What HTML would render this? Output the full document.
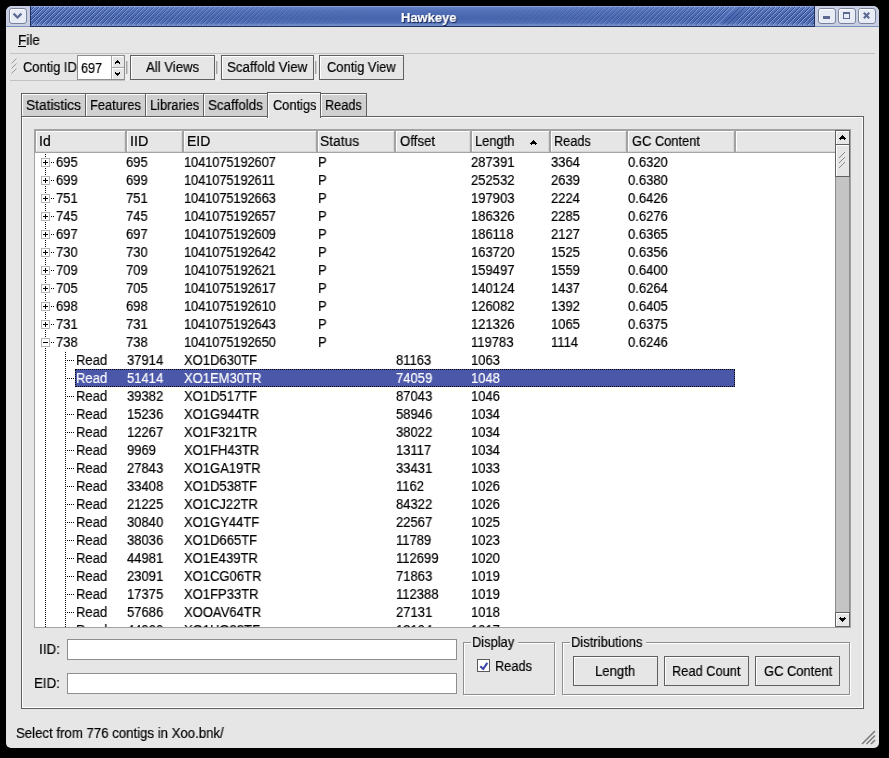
<!DOCTYPE html>
<html><head><meta charset="utf-8"><style>
html,body{margin:0;padding:0;}
body{width:889px;height:758px;background:#000;position:relative;overflow:hidden;font-family:"Liberation Sans",sans-serif;}
div,svg{position:absolute;box-sizing:content-box;}
.tf{white-space:nowrap;font-family:"Liberation Sans",sans-serif;will-change:transform;transform-origin:0 0;-webkit-text-stroke:0.2px currentColor;}
.t{white-space:nowrap;will-change:transform;transform:scaleX(0.93);transform-origin:0 0;-webkit-text-stroke:0.2px currentColor;font-family:"Liberation Sans",sans-serif;}
</style></head><body>
<div style="left:6px;top:6px;width:873px;height:742px;background:#e6e6e6;border-radius:6px 6px 5px 5px;"></div>
<div style="left:6px;top:6px;width:873px;height:20px;background:#c8cfe2;border-radius:6px 6px 0 0;"></div>
<div style="left:6px;top:26px;width:873px;height:1px;background:#7d8fbd;"></div>
<div style="left:30px;top:6px;width:785px;height:21px;background:#1f3060"></div>
<div style="left:31px;top:6px;width:783px;height:20px;background:linear-gradient(180deg,#8aa2da 0px,#8aa2da 1px,#6280c3 1px,#5170b7 5px,#4765ad 12px,#4f6db4 17px,#7390ca 19px,#7390ca 20px)"></div>
<div style="left:31px;top:7px;width:783px;height:18px;background:repeating-linear-gradient(135deg,transparent 0px,transparent 1.5px,rgba(25,40,95,0.55) 1.5px,rgba(25,40,95,0.55) 2.2px,rgba(190,208,250,0.55) 2.2px,rgba(190,208,250,0.55) 2.9px,transparent 2.9px,transparent 3.54px);-webkit-mask-image:linear-gradient(90deg,#000 0%,rgba(0,0,0,0.15) 35%,transparent 46%,transparent 54%,rgba(0,0,0,0.15) 65%,#000 100%);"></div>
<div class="tf" style="left:402.11px;top:11px;font-size:13px;line-height:15px;color:#1c2a55;transform:scaleX(0.9944);font-weight:bold;">Hawkeye</div>
<div class="tf" style="left:401.11px;top:10px;font-size:13px;line-height:15px;color:#fff;transform:scaleX(0.9944);font-weight:bold;">Hawkeye</div>
<div style="left:9px;top:8px;width:16px;height:14px;border:1px solid #78829c;border-radius:3px;background:#e8ecf6;"></div>
<div style="left:11px;top:9px;width:13px;height:1px;background:#fff"></div>
<div style="left:10px;top:10px;width:1px;height:11px;background:#fff"></div>
<div style="left:818px;top:8px;width:16px;height:14px;border:1px solid #78829c;border-radius:3px;background:#e8ecf6;"></div>
<div style="left:820px;top:9px;width:13px;height:1px;background:#fff"></div>
<div style="left:819px;top:10px;width:1px;height:11px;background:#fff"></div>
<div style="left:838px;top:8px;width:16px;height:14px;border:1px solid #78829c;border-radius:3px;background:#e8ecf6;"></div>
<div style="left:840px;top:9px;width:13px;height:1px;background:#fff"></div>
<div style="left:839px;top:10px;width:1px;height:11px;background:#fff"></div>
<div style="left:858px;top:8px;width:16px;height:14px;border:1px solid #78829c;border-radius:3px;background:#e8ecf6;"></div>
<div style="left:860px;top:9px;width:13px;height:1px;background:#fff"></div>
<div style="left:859px;top:10px;width:1px;height:11px;background:#fff"></div>
<svg style="left:12px;top:11px" width="12" height="10"><path d="M1.6 2.6 L5.5 6.5 L9.4 2.6" stroke="#5b6a90" stroke-width="2.2" fill="none"/></svg>
<div style="left:823px;top:16px;width:7px;height:3px;background:#5b6890;"></div>
<div style="left:843px;top:12px;width:5px;height:4px;border:1px solid #5b6890;border-top:2px solid #5b6890;"></div>
<svg style="left:862px;top:11px" width="9" height="9"><path d="M1.8 1.8 L7.2 7.2 M7.2 1.8 L1.8 7.2" stroke="#5b6890" stroke-width="2.1" fill="none"/></svg>
<div class="tf" style="left:17.93px;top:33px;font-size:14px;line-height:15px;color:#000;transform:scaleX(0.9714);">File</div>
<div style="left:18px;top:46px;width:8px;height:1px;background:#000;"></div>
<div style="left:10px;top:53px;width:865px;height:1px;background:#c2c2c2;"></div>
<div style="left:10px;top:80px;width:119px;height:1px;background:#c2c2c2;"></div>
<svg style="left:11px;top:57px" width="7" height="17"><path d="M0.5 6.5 L5.5 1.5 M0.5 11.5 L5.5 6.5 M0.5 16.5 L5.5 11.5" stroke="#9a9a9a" stroke-width="1" fill="none"/></svg>
<div class="tf" style="left:22.70px;top:60px;font-size:14px;line-height:15px;color:#000;transform:scaleX(0.9224);">Contig ID</div>
<div style="left:77px;top:55px;width:46px;height:23px;border:1px solid #8e8e8e;"></div>
<div style="left:78px;top:56px;width:33px;height:23px;background:#fff;"></div>
<div style="left:111px;top:56px;width:13px;height:23px;background:#e6e6e6;"></div>
<div style="left:111px;top:56px;width:1px;height:23px;background:#a8a8a8;"></div>
<div style="left:112px;top:67px;width:12px;height:1px;background:#a8a8a8;"></div>
<div style="left:112px;top:56px;width:11px;height:1px;background:#fff;"></div>
<div style="left:112px;top:56px;width:1px;height:11px;background:#fff;"></div>
<div style="left:112px;top:68px;width:11px;height:1px;background:#fff;"></div>
<div style="left:112px;top:68px;width:1px;height:11px;background:#fff;"></div>
<svg style="left:115px;top:60px" width="5" height="4" shape-rendering="crispEdges" fill="#000"><rect x="2" y="0" width="1" height="1"/><rect x="1" y="1" width="1" height="1"/><rect x="2" y="1" width="1" height="1"/><rect x="3" y="1" width="1" height="1"/><rect x="0" y="2" width="1" height="1"/><rect x="1" y="2" width="1" height="1"/><rect x="2" y="2" width="1" height="1"/><rect x="3" y="2" width="1" height="1"/><rect x="4" y="2" width="1" height="1"/><rect x="0" y="3" width="1" height="1"/><rect x="4" y="3" width="1" height="1"/></svg>
<svg style="left:115px;top:72px" width="5" height="4" shape-rendering="crispEdges" fill="#000"><rect x="0" y="0" width="1" height="1"/><rect x="4" y="0" width="1" height="1"/><rect x="0" y="1" width="1" height="1"/><rect x="1" y="1" width="1" height="1"/><rect x="2" y="1" width="1" height="1"/><rect x="3" y="1" width="1" height="1"/><rect x="4" y="1" width="1" height="1"/><rect x="1" y="2" width="1" height="1"/><rect x="2" y="2" width="1" height="1"/><rect x="3" y="2" width="1" height="1"/><rect x="2" y="3" width="1" height="1"/></svg>
<div class="tf" style="left:80.70px;top:61px;font-size:14px;line-height:15px;color:#000;transform:scaleX(0.9043);">697</div>
<div style="left:125px;top:54px;width:5px;height:27px;background:#ececec;"></div>
<div style="left:126px;top:61px;width:1px;height:13px;background:#a4a4a4;"></div>
<div style="left:127px;top:61px;width:1px;height:13px;background:#cdcdcd;"></div>
<div style="left:215px;top:54px;width:5px;height:27px;background:#ececec;"></div>
<div style="left:216px;top:61px;width:1px;height:13px;background:#a4a4a4;"></div>
<div style="left:217px;top:61px;width:1px;height:13px;background:#cdcdcd;"></div>
<div style="left:314px;top:54px;width:5px;height:27px;background:#ececec;"></div>
<div style="left:315px;top:61px;width:1px;height:13px;background:#a4a4a4;"></div>
<div style="left:316px;top:61px;width:1px;height:13px;background:#cdcdcd;"></div>
<div style="left:130px;top:55px;width:83px;height:23px;border:1px solid #606060;background:#e6e6e6;"></div>
<div style="left:131px;top:56px;width:83px;height:1px;background:#fff;"></div>
<div style="left:131px;top:56px;width:1px;height:23px;background:#fff;"></div>
<div class="tf" style="left:145.90px;top:60px;font-size:14px;line-height:15px;color:#000;transform:scaleX(0.9393);">All Views</div>
<div style="left:221px;top:55px;width:91px;height:23px;border:1px solid #606060;background:#e6e6e6;"></div>
<div style="left:222px;top:56px;width:91px;height:1px;background:#fff;"></div>
<div style="left:222px;top:56px;width:1px;height:23px;background:#fff;"></div>
<div class="tf" style="left:226.85px;top:60px;font-size:14px;line-height:15px;color:#000;transform:scaleX(0.9512);">Scaffold View</div>
<div style="left:319px;top:55px;width:83px;height:23px;border:1px solid #606060;background:#e6e6e6;"></div>
<div style="left:320px;top:56px;width:83px;height:1px;background:#fff;"></div>
<div style="left:320px;top:56px;width:1px;height:23px;background:#fff;"></div>
<div class="tf" style="left:326.50px;top:60px;font-size:14px;line-height:15px;color:#000;transform:scaleX(0.9227);">Contig View</div>
<div style="left:21px;top:116px;width:843px;height:593px;background:#606060;"></div>
<div style="left:22px;top:117px;width:841px;height:591px;background:#fff;"></div>
<div style="left:23px;top:118px;width:839px;height:589px;background:#e6e6e6;"></div>
<div style="left:21px;top:93px;width:65px;height:24px;background:#606060;"></div>
<div style="left:22px;top:94px;width:63px;height:22px;background:#fff;"></div>
<div style="left:23px;top:95px;width:62px;height:21px;background:#d0d0d0;"></div>
<div class="tf" style="left:25.72px;top:98px;font-size:14px;line-height:15px;color:#000;transform:scaleX(0.9800);">Statistics</div>
<div style="left:85px;top:93px;width:61px;height:24px;background:#606060;"></div>
<div style="left:86px;top:94px;width:59px;height:22px;background:#fff;"></div>
<div style="left:87px;top:95px;width:58px;height:21px;background:#d0d0d0;"></div>
<div class="tf" style="left:89.98px;top:98px;font-size:14px;line-height:15px;color:#000;transform:scaleX(0.9204);">Features</div>
<div style="left:145px;top:93px;width:59px;height:24px;background:#606060;"></div>
<div style="left:146px;top:94px;width:57px;height:22px;background:#fff;"></div>
<div style="left:147px;top:95px;width:56px;height:21px;background:#d0d0d0;"></div>
<div class="tf" style="left:150.08px;top:98px;font-size:14px;line-height:15px;color:#000;transform:scaleX(0.9154);">Libraries</div>
<div style="left:203px;top:93px;width:65px;height:24px;background:#606060;"></div>
<div style="left:204px;top:94px;width:63px;height:22px;background:#fff;"></div>
<div style="left:205px;top:95px;width:62px;height:21px;background:#d0d0d0;"></div>
<div class="tf" style="left:208.14px;top:98px;font-size:14px;line-height:15px;color:#000;transform:scaleX(0.9571);">Scaffolds</div>
<div style="left:267px;top:92px;width:54px;height:26px;background:#606060;"></div>
<div style="left:268px;top:93px;width:52px;height:26px;background:#fff;"></div>
<div style="left:269px;top:94px;width:51px;height:25px;background:#e6e6e6;"></div>
<div class="tf" style="left:272.80px;top:98px;font-size:14px;line-height:15px;color:#000;transform:scaleX(0.9149);">Contigs</div>
<div style="left:320px;top:93px;width:47px;height:24px;background:#606060;"></div>
<div style="left:321px;top:94px;width:45px;height:22px;background:#fff;"></div>
<div style="left:322px;top:95px;width:44px;height:21px;background:#d0d0d0;"></div>
<div class="tf" style="left:325.39px;top:98px;font-size:14px;line-height:15px;color:#000;transform:scaleX(0.9077);">Reads</div>
<div style="left:34px;top:129px;width:817px;height:499px;background:#a3a3a3;"></div>
<div style="left:35px;top:130px;width:815px;height:497px;background:#fff;"></div>
<div style="left:35px;top:130px;width:800px;height:23px;background:#a3a3a3;"></div>
<div style="left:36px;top:131px;width:799px;height:21px;background:#e6e6e6;"></div>
<div style="left:36px;top:151px;width:799px;height:1px;background:#d6d6d6;"></div>
<div style="left:36px;top:131px;width:799px;height:1px;background:#fff;"></div>
<div style="left:36px;top:131px;width:1px;height:20px;background:#fff;"></div>
<div style="left:127px;top:131px;width:1px;height:20px;background:#fff;"></div>
<div style="left:125px;top:131px;width:1px;height:21px;background:#a3a3a3;"></div>
<div style="left:126px;top:131px;width:1px;height:21px;background:#a3a3a3;"></div>
<div style="left:124px;top:132px;width:1px;height:19px;background:#d6d6d6;"></div>
<div style="left:184px;top:131px;width:1px;height:20px;background:#fff;"></div>
<div style="left:182px;top:131px;width:1px;height:21px;background:#a3a3a3;"></div>
<div style="left:183px;top:131px;width:1px;height:21px;background:#a3a3a3;"></div>
<div style="left:181px;top:132px;width:1px;height:19px;background:#d6d6d6;"></div>
<div style="left:318px;top:131px;width:1px;height:20px;background:#fff;"></div>
<div style="left:316px;top:131px;width:1px;height:21px;background:#a3a3a3;"></div>
<div style="left:317px;top:131px;width:1px;height:21px;background:#a3a3a3;"></div>
<div style="left:315px;top:132px;width:1px;height:19px;background:#d6d6d6;"></div>
<div style="left:396px;top:131px;width:1px;height:20px;background:#fff;"></div>
<div style="left:394px;top:131px;width:1px;height:21px;background:#a3a3a3;"></div>
<div style="left:395px;top:131px;width:1px;height:21px;background:#a3a3a3;"></div>
<div style="left:393px;top:132px;width:1px;height:19px;background:#d6d6d6;"></div>
<div style="left:472px;top:131px;width:1px;height:20px;background:#fff;"></div>
<div style="left:470px;top:131px;width:1px;height:21px;background:#a3a3a3;"></div>
<div style="left:471px;top:131px;width:1px;height:21px;background:#a3a3a3;"></div>
<div style="left:469px;top:132px;width:1px;height:19px;background:#d6d6d6;"></div>
<div style="left:551px;top:131px;width:1px;height:20px;background:#fff;"></div>
<div style="left:549px;top:131px;width:1px;height:21px;background:#a3a3a3;"></div>
<div style="left:550px;top:131px;width:1px;height:21px;background:#a3a3a3;"></div>
<div style="left:548px;top:132px;width:1px;height:19px;background:#d6d6d6;"></div>
<div style="left:628px;top:131px;width:1px;height:20px;background:#fff;"></div>
<div style="left:626px;top:131px;width:1px;height:21px;background:#a3a3a3;"></div>
<div style="left:627px;top:131px;width:1px;height:21px;background:#a3a3a3;"></div>
<div style="left:625px;top:132px;width:1px;height:19px;background:#d6d6d6;"></div>
<div style="left:736px;top:131px;width:1px;height:20px;background:#fff;"></div>
<div style="left:734px;top:131px;width:1px;height:21px;background:#a3a3a3;"></div>
<div style="left:735px;top:131px;width:1px;height:21px;background:#a3a3a3;"></div>
<div style="left:733px;top:132px;width:1px;height:19px;background:#d6d6d6;"></div>
<div class="tf" style="left:39.11px;top:134px;font-size:14px;line-height:15px;color:#000;transform:scaleX(0.9900);">Id</div>
<div class="tf" style="left:130.47px;top:134px;font-size:14px;line-height:15px;color:#000;transform:scaleX(1.0250);">IID</div>
<div class="tf" style="left:186.70px;top:134px;font-size:14px;line-height:15px;color:#000;transform:scaleX(1.0000);">EID</div>
<div class="tf" style="left:320.42px;top:134px;font-size:14px;line-height:15px;color:#000;transform:scaleX(0.9842);">Status</div>
<div class="tf" style="left:400.20px;top:134px;font-size:14px;line-height:15px;color:#000;transform:scaleX(0.9432);">Offset</div>
<div class="tf" style="left:475.28px;top:134px;font-size:14px;line-height:15px;color:#000;transform:scaleX(0.9220);">Length</div>
<div class="tf" style="left:554.09px;top:134px;font-size:14px;line-height:15px;color:#000;transform:scaleX(0.9077);">Reads</div>
<div class="tf" style="left:631.50px;top:134px;font-size:14px;line-height:15px;color:#000;transform:scaleX(0.9189);">GC Content</div>
<svg style="left:530px;top:140px" width="7" height="5" shape-rendering="crispEdges" fill="#000"><rect x="3" y="0" width="1" height="1"/><rect x="2" y="1" width="1" height="1"/><rect x="3" y="1" width="1" height="1"/><rect x="4" y="1" width="1" height="1"/><rect x="1" y="2" width="1" height="1"/><rect x="2" y="2" width="1" height="1"/><rect x="3" y="2" width="1" height="1"/><rect x="4" y="2" width="1" height="1"/><rect x="5" y="2" width="1" height="1"/><rect x="0" y="3" width="1" height="1"/><rect x="1" y="3" width="1" height="1"/><rect x="2" y="3" width="1" height="1"/><rect x="3" y="3" width="1" height="1"/><rect x="4" y="3" width="1" height="1"/><rect x="5" y="3" width="1" height="1"/><rect x="6" y="3" width="1" height="1"/><rect x="1" y="4" width="1" height="1"/><rect x="5" y="4" width="1" height="1"/></svg>
<div style="left:35px;top:153px;width:800px;height:474px;overflow:hidden">
<div style="left:40px;top:216px;width:660px;height:18px;background:#4b57a8;"></div>
<div style="left:40px;top:216px;width:658px;height:16px;border:1px dotted #000;"></div>
<div style="left:10px;top:1px;width:1px;height:474px;background:transparent;background:repeating-linear-gradient(180deg,#000 0px,#000 1px,transparent 1px,transparent 2px);"></div>
<div style="left:30px;top:199px;width:1px;height:300px;background:transparent;background:repeating-linear-gradient(180deg,#000 0px,#000 1px,transparent 1px,transparent 2px);"></div>
<div style="left:6px;top:5px;width:9px;height:9px;background:#fff;box-sizing:border-box;border:1px solid #b4b4b4;"></div>
<div style="left:8px;top:9px;width:5px;height:1px;background:#000;"></div>
<div style="left:10px;top:7px;width:1px;height:5px;background:#000;"></div>
<div style="left:16px;top:9px;width:4px;height:1px;background:transparent;background:repeating-linear-gradient(90deg,#000 0px,#000 1px,transparent 1px,transparent 2px);"></div>
<div class="t" style="left:21px;top:2px;font-size:14px;line-height:15px;color:#000;">695</div>
<div class="t" style="left:91px;top:2px;font-size:14px;line-height:15px;color:#000;">695</div>
<div class="t" style="left:149px;top:2px;font-size:14px;line-height:15px;color:#000;letter-spacing:-0.2px">1041075192607</div>
<div class="t" style="left:283px;top:2px;font-size:14px;line-height:15px;color:#000;">P</div>
<div class="t" style="left:436px;top:2px;font-size:14px;line-height:15px;color:#000;">287391</div>
<div class="t" style="left:516px;top:2px;font-size:14px;line-height:15px;color:#000;">3364</div>
<div class="t" style="left:593px;top:2px;font-size:14px;line-height:15px;color:#000;">0.6320</div>
<div style="left:6px;top:23px;width:9px;height:9px;background:#fff;box-sizing:border-box;border:1px solid #b4b4b4;"></div>
<div style="left:8px;top:27px;width:5px;height:1px;background:#000;"></div>
<div style="left:10px;top:25px;width:1px;height:5px;background:#000;"></div>
<div style="left:16px;top:27px;width:4px;height:1px;background:transparent;background:repeating-linear-gradient(90deg,#000 0px,#000 1px,transparent 1px,transparent 2px);"></div>
<div class="t" style="left:21px;top:20px;font-size:14px;line-height:15px;color:#000;">699</div>
<div class="t" style="left:91px;top:20px;font-size:14px;line-height:15px;color:#000;">699</div>
<div class="t" style="left:149px;top:20px;font-size:14px;line-height:15px;color:#000;letter-spacing:-0.2px">1041075192611</div>
<div class="t" style="left:283px;top:20px;font-size:14px;line-height:15px;color:#000;">P</div>
<div class="t" style="left:436px;top:20px;font-size:14px;line-height:15px;color:#000;">252532</div>
<div class="t" style="left:516px;top:20px;font-size:14px;line-height:15px;color:#000;">2639</div>
<div class="t" style="left:593px;top:20px;font-size:14px;line-height:15px;color:#000;">0.6380</div>
<div style="left:6px;top:41px;width:9px;height:9px;background:#fff;box-sizing:border-box;border:1px solid #b4b4b4;"></div>
<div style="left:8px;top:45px;width:5px;height:1px;background:#000;"></div>
<div style="left:10px;top:43px;width:1px;height:5px;background:#000;"></div>
<div style="left:16px;top:45px;width:4px;height:1px;background:transparent;background:repeating-linear-gradient(90deg,#000 0px,#000 1px,transparent 1px,transparent 2px);"></div>
<div class="t" style="left:21px;top:38px;font-size:14px;line-height:15px;color:#000;">751</div>
<div class="t" style="left:91px;top:38px;font-size:14px;line-height:15px;color:#000;">751</div>
<div class="t" style="left:149px;top:38px;font-size:14px;line-height:15px;color:#000;letter-spacing:-0.2px">1041075192663</div>
<div class="t" style="left:283px;top:38px;font-size:14px;line-height:15px;color:#000;">P</div>
<div class="t" style="left:436px;top:38px;font-size:14px;line-height:15px;color:#000;">197903</div>
<div class="t" style="left:516px;top:38px;font-size:14px;line-height:15px;color:#000;">2224</div>
<div class="t" style="left:593px;top:38px;font-size:14px;line-height:15px;color:#000;">0.6426</div>
<div style="left:6px;top:59px;width:9px;height:9px;background:#fff;box-sizing:border-box;border:1px solid #b4b4b4;"></div>
<div style="left:8px;top:63px;width:5px;height:1px;background:#000;"></div>
<div style="left:10px;top:61px;width:1px;height:5px;background:#000;"></div>
<div style="left:16px;top:63px;width:4px;height:1px;background:transparent;background:repeating-linear-gradient(90deg,#000 0px,#000 1px,transparent 1px,transparent 2px);"></div>
<div class="t" style="left:21px;top:56px;font-size:14px;line-height:15px;color:#000;">745</div>
<div class="t" style="left:91px;top:56px;font-size:14px;line-height:15px;color:#000;">745</div>
<div class="t" style="left:149px;top:56px;font-size:14px;line-height:15px;color:#000;letter-spacing:-0.2px">1041075192657</div>
<div class="t" style="left:283px;top:56px;font-size:14px;line-height:15px;color:#000;">P</div>
<div class="t" style="left:436px;top:56px;font-size:14px;line-height:15px;color:#000;">186326</div>
<div class="t" style="left:516px;top:56px;font-size:14px;line-height:15px;color:#000;">2285</div>
<div class="t" style="left:593px;top:56px;font-size:14px;line-height:15px;color:#000;">0.6276</div>
<div style="left:6px;top:77px;width:9px;height:9px;background:#fff;box-sizing:border-box;border:1px solid #b4b4b4;"></div>
<div style="left:8px;top:81px;width:5px;height:1px;background:#000;"></div>
<div style="left:10px;top:79px;width:1px;height:5px;background:#000;"></div>
<div style="left:16px;top:81px;width:4px;height:1px;background:transparent;background:repeating-linear-gradient(90deg,#000 0px,#000 1px,transparent 1px,transparent 2px);"></div>
<div class="t" style="left:21px;top:74px;font-size:14px;line-height:15px;color:#000;">697</div>
<div class="t" style="left:91px;top:74px;font-size:14px;line-height:15px;color:#000;">697</div>
<div class="t" style="left:149px;top:74px;font-size:14px;line-height:15px;color:#000;letter-spacing:-0.2px">1041075192609</div>
<div class="t" style="left:283px;top:74px;font-size:14px;line-height:15px;color:#000;">P</div>
<div class="t" style="left:436px;top:74px;font-size:14px;line-height:15px;color:#000;">186118</div>
<div class="t" style="left:516px;top:74px;font-size:14px;line-height:15px;color:#000;">2127</div>
<div class="t" style="left:593px;top:74px;font-size:14px;line-height:15px;color:#000;">0.6365</div>
<div style="left:6px;top:95px;width:9px;height:9px;background:#fff;box-sizing:border-box;border:1px solid #b4b4b4;"></div>
<div style="left:8px;top:99px;width:5px;height:1px;background:#000;"></div>
<div style="left:10px;top:97px;width:1px;height:5px;background:#000;"></div>
<div style="left:16px;top:99px;width:4px;height:1px;background:transparent;background:repeating-linear-gradient(90deg,#000 0px,#000 1px,transparent 1px,transparent 2px);"></div>
<div class="t" style="left:21px;top:92px;font-size:14px;line-height:15px;color:#000;">730</div>
<div class="t" style="left:91px;top:92px;font-size:14px;line-height:15px;color:#000;">730</div>
<div class="t" style="left:149px;top:92px;font-size:14px;line-height:15px;color:#000;letter-spacing:-0.2px">1041075192642</div>
<div class="t" style="left:283px;top:92px;font-size:14px;line-height:15px;color:#000;">P</div>
<div class="t" style="left:436px;top:92px;font-size:14px;line-height:15px;color:#000;">163720</div>
<div class="t" style="left:516px;top:92px;font-size:14px;line-height:15px;color:#000;">1525</div>
<div class="t" style="left:593px;top:92px;font-size:14px;line-height:15px;color:#000;">0.6356</div>
<div style="left:6px;top:113px;width:9px;height:9px;background:#fff;box-sizing:border-box;border:1px solid #b4b4b4;"></div>
<div style="left:8px;top:117px;width:5px;height:1px;background:#000;"></div>
<div style="left:10px;top:115px;width:1px;height:5px;background:#000;"></div>
<div style="left:16px;top:117px;width:4px;height:1px;background:transparent;background:repeating-linear-gradient(90deg,#000 0px,#000 1px,transparent 1px,transparent 2px);"></div>
<div class="t" style="left:21px;top:110px;font-size:14px;line-height:15px;color:#000;">709</div>
<div class="t" style="left:91px;top:110px;font-size:14px;line-height:15px;color:#000;">709</div>
<div class="t" style="left:149px;top:110px;font-size:14px;line-height:15px;color:#000;letter-spacing:-0.2px">1041075192621</div>
<div class="t" style="left:283px;top:110px;font-size:14px;line-height:15px;color:#000;">P</div>
<div class="t" style="left:436px;top:110px;font-size:14px;line-height:15px;color:#000;">159497</div>
<div class="t" style="left:516px;top:110px;font-size:14px;line-height:15px;color:#000;">1559</div>
<div class="t" style="left:593px;top:110px;font-size:14px;line-height:15px;color:#000;">0.6400</div>
<div style="left:6px;top:131px;width:9px;height:9px;background:#fff;box-sizing:border-box;border:1px solid #b4b4b4;"></div>
<div style="left:8px;top:135px;width:5px;height:1px;background:#000;"></div>
<div style="left:10px;top:133px;width:1px;height:5px;background:#000;"></div>
<div style="left:16px;top:135px;width:4px;height:1px;background:transparent;background:repeating-linear-gradient(90deg,#000 0px,#000 1px,transparent 1px,transparent 2px);"></div>
<div class="t" style="left:21px;top:128px;font-size:14px;line-height:15px;color:#000;">705</div>
<div class="t" style="left:91px;top:128px;font-size:14px;line-height:15px;color:#000;">705</div>
<div class="t" style="left:149px;top:128px;font-size:14px;line-height:15px;color:#000;letter-spacing:-0.2px">1041075192617</div>
<div class="t" style="left:283px;top:128px;font-size:14px;line-height:15px;color:#000;">P</div>
<div class="t" style="left:436px;top:128px;font-size:14px;line-height:15px;color:#000;">140124</div>
<div class="t" style="left:516px;top:128px;font-size:14px;line-height:15px;color:#000;">1437</div>
<div class="t" style="left:593px;top:128px;font-size:14px;line-height:15px;color:#000;">0.6264</div>
<div style="left:6px;top:149px;width:9px;height:9px;background:#fff;box-sizing:border-box;border:1px solid #b4b4b4;"></div>
<div style="left:8px;top:153px;width:5px;height:1px;background:#000;"></div>
<div style="left:10px;top:151px;width:1px;height:5px;background:#000;"></div>
<div style="left:16px;top:153px;width:4px;height:1px;background:transparent;background:repeating-linear-gradient(90deg,#000 0px,#000 1px,transparent 1px,transparent 2px);"></div>
<div class="t" style="left:21px;top:146px;font-size:14px;line-height:15px;color:#000;">698</div>
<div class="t" style="left:91px;top:146px;font-size:14px;line-height:15px;color:#000;">698</div>
<div class="t" style="left:149px;top:146px;font-size:14px;line-height:15px;color:#000;letter-spacing:-0.2px">1041075192610</div>
<div class="t" style="left:283px;top:146px;font-size:14px;line-height:15px;color:#000;">P</div>
<div class="t" style="left:436px;top:146px;font-size:14px;line-height:15px;color:#000;">126082</div>
<div class="t" style="left:516px;top:146px;font-size:14px;line-height:15px;color:#000;">1392</div>
<div class="t" style="left:593px;top:146px;font-size:14px;line-height:15px;color:#000;">0.6405</div>
<div style="left:6px;top:167px;width:9px;height:9px;background:#fff;box-sizing:border-box;border:1px solid #b4b4b4;"></div>
<div style="left:8px;top:171px;width:5px;height:1px;background:#000;"></div>
<div style="left:10px;top:169px;width:1px;height:5px;background:#000;"></div>
<div style="left:16px;top:171px;width:4px;height:1px;background:transparent;background:repeating-linear-gradient(90deg,#000 0px,#000 1px,transparent 1px,transparent 2px);"></div>
<div class="t" style="left:21px;top:164px;font-size:14px;line-height:15px;color:#000;">731</div>
<div class="t" style="left:91px;top:164px;font-size:14px;line-height:15px;color:#000;">731</div>
<div class="t" style="left:149px;top:164px;font-size:14px;line-height:15px;color:#000;letter-spacing:-0.2px">1041075192643</div>
<div class="t" style="left:283px;top:164px;font-size:14px;line-height:15px;color:#000;">P</div>
<div class="t" style="left:436px;top:164px;font-size:14px;line-height:15px;color:#000;">121326</div>
<div class="t" style="left:516px;top:164px;font-size:14px;line-height:15px;color:#000;">1065</div>
<div class="t" style="left:593px;top:164px;font-size:14px;line-height:15px;color:#000;">0.6375</div>
<div style="left:6px;top:185px;width:9px;height:9px;background:#fff;box-sizing:border-box;border:1px solid #b4b4b4;"></div>
<div style="left:8px;top:189px;width:5px;height:1px;background:#000;"></div>
<div style="left:16px;top:189px;width:4px;height:1px;background:transparent;background:repeating-linear-gradient(90deg,#000 0px,#000 1px,transparent 1px,transparent 2px);"></div>
<div class="t" style="left:21px;top:182px;font-size:14px;line-height:15px;color:#000;">738</div>
<div class="t" style="left:91px;top:182px;font-size:14px;line-height:15px;color:#000;">738</div>
<div class="t" style="left:149px;top:182px;font-size:14px;line-height:15px;color:#000;letter-spacing:-0.2px">1041075192650</div>
<div class="t" style="left:283px;top:182px;font-size:14px;line-height:15px;color:#000;">P</div>
<div class="t" style="left:436px;top:182px;font-size:14px;line-height:15px;color:#000;">119783</div>
<div class="t" style="left:516px;top:182px;font-size:14px;line-height:15px;color:#000;">1114</div>
<div class="t" style="left:593px;top:182px;font-size:14px;line-height:15px;color:#000;">0.6246</div>
<div style="left:32px;top:207px;width:7px;height:1px;background:transparent;background:repeating-linear-gradient(90deg,#000 0px,#000 1px,transparent 1px,transparent 2px);"></div>
<div class="t" style="left:41px;top:200px;font-size:14px;line-height:15px;color:#000;">Read</div>
<div class="t" style="left:92px;top:200px;font-size:14px;line-height:15px;color:#000;">37914</div>
<div class="t" style="left:149px;top:200px;font-size:14px;line-height:15px;color:#000;">XO1D630TF</div>
<div class="t" style="left:361px;top:200px;font-size:14px;line-height:15px;color:#000;">81163</div>
<div class="t" style="left:436px;top:200px;font-size:14px;line-height:15px;color:#000;">1063</div>
<div style="left:32px;top:225px;width:7px;height:1px;background:transparent;background:repeating-linear-gradient(90deg,#000 0px,#000 1px,transparent 1px,transparent 2px);"></div>
<div class="t" style="left:41px;top:218px;font-size:14px;line-height:15px;color:#fff;">Read</div>
<div class="t" style="left:92px;top:218px;font-size:14px;line-height:15px;color:#fff;">51414</div>
<div class="t" style="left:149px;top:218px;font-size:14px;line-height:15px;color:#fff;">XO1EM30TR</div>
<div class="t" style="left:361px;top:218px;font-size:14px;line-height:15px;color:#fff;">74059</div>
<div class="t" style="left:436px;top:218px;font-size:14px;line-height:15px;color:#fff;">1048</div>
<div style="left:32px;top:243px;width:7px;height:1px;background:transparent;background:repeating-linear-gradient(90deg,#000 0px,#000 1px,transparent 1px,transparent 2px);"></div>
<div class="t" style="left:41px;top:236px;font-size:14px;line-height:15px;color:#000;">Read</div>
<div class="t" style="left:92px;top:236px;font-size:14px;line-height:15px;color:#000;">39382</div>
<div class="t" style="left:149px;top:236px;font-size:14px;line-height:15px;color:#000;">XO1D517TF</div>
<div class="t" style="left:361px;top:236px;font-size:14px;line-height:15px;color:#000;">87043</div>
<div class="t" style="left:436px;top:236px;font-size:14px;line-height:15px;color:#000;">1046</div>
<div style="left:32px;top:261px;width:7px;height:1px;background:transparent;background:repeating-linear-gradient(90deg,#000 0px,#000 1px,transparent 1px,transparent 2px);"></div>
<div class="t" style="left:41px;top:254px;font-size:14px;line-height:15px;color:#000;">Read</div>
<div class="t" style="left:92px;top:254px;font-size:14px;line-height:15px;color:#000;">15236</div>
<div class="t" style="left:149px;top:254px;font-size:14px;line-height:15px;color:#000;">XO1G944TR</div>
<div class="t" style="left:361px;top:254px;font-size:14px;line-height:15px;color:#000;">58946</div>
<div class="t" style="left:436px;top:254px;font-size:14px;line-height:15px;color:#000;">1034</div>
<div style="left:32px;top:279px;width:7px;height:1px;background:transparent;background:repeating-linear-gradient(90deg,#000 0px,#000 1px,transparent 1px,transparent 2px);"></div>
<div class="t" style="left:41px;top:272px;font-size:14px;line-height:15px;color:#000;">Read</div>
<div class="t" style="left:92px;top:272px;font-size:14px;line-height:15px;color:#000;">12267</div>
<div class="t" style="left:149px;top:272px;font-size:14px;line-height:15px;color:#000;">XO1F321TR</div>
<div class="t" style="left:361px;top:272px;font-size:14px;line-height:15px;color:#000;">38022</div>
<div class="t" style="left:436px;top:272px;font-size:14px;line-height:15px;color:#000;">1034</div>
<div style="left:32px;top:297px;width:7px;height:1px;background:transparent;background:repeating-linear-gradient(90deg,#000 0px,#000 1px,transparent 1px,transparent 2px);"></div>
<div class="t" style="left:41px;top:290px;font-size:14px;line-height:15px;color:#000;">Read</div>
<div class="t" style="left:92px;top:290px;font-size:14px;line-height:15px;color:#000;">9969</div>
<div class="t" style="left:149px;top:290px;font-size:14px;line-height:15px;color:#000;">XO1FH43TR</div>
<div class="t" style="left:361px;top:290px;font-size:14px;line-height:15px;color:#000;">13117</div>
<div class="t" style="left:436px;top:290px;font-size:14px;line-height:15px;color:#000;">1034</div>
<div style="left:32px;top:315px;width:7px;height:1px;background:transparent;background:repeating-linear-gradient(90deg,#000 0px,#000 1px,transparent 1px,transparent 2px);"></div>
<div class="t" style="left:41px;top:308px;font-size:14px;line-height:15px;color:#000;">Read</div>
<div class="t" style="left:92px;top:308px;font-size:14px;line-height:15px;color:#000;">27843</div>
<div class="t" style="left:149px;top:308px;font-size:14px;line-height:15px;color:#000;">XO1GA19TR</div>
<div class="t" style="left:361px;top:308px;font-size:14px;line-height:15px;color:#000;">33431</div>
<div class="t" style="left:436px;top:308px;font-size:14px;line-height:15px;color:#000;">1033</div>
<div style="left:32px;top:333px;width:7px;height:1px;background:transparent;background:repeating-linear-gradient(90deg,#000 0px,#000 1px,transparent 1px,transparent 2px);"></div>
<div class="t" style="left:41px;top:326px;font-size:14px;line-height:15px;color:#000;">Read</div>
<div class="t" style="left:92px;top:326px;font-size:14px;line-height:15px;color:#000;">33408</div>
<div class="t" style="left:149px;top:326px;font-size:14px;line-height:15px;color:#000;">XO1D538TF</div>
<div class="t" style="left:361px;top:326px;font-size:14px;line-height:15px;color:#000;">1162</div>
<div class="t" style="left:436px;top:326px;font-size:14px;line-height:15px;color:#000;">1026</div>
<div style="left:32px;top:351px;width:7px;height:1px;background:transparent;background:repeating-linear-gradient(90deg,#000 0px,#000 1px,transparent 1px,transparent 2px);"></div>
<div class="t" style="left:41px;top:344px;font-size:14px;line-height:15px;color:#000;">Read</div>
<div class="t" style="left:92px;top:344px;font-size:14px;line-height:15px;color:#000;">21225</div>
<div class="t" style="left:149px;top:344px;font-size:14px;line-height:15px;color:#000;">XO1CJ22TR</div>
<div class="t" style="left:361px;top:344px;font-size:14px;line-height:15px;color:#000;">84322</div>
<div class="t" style="left:436px;top:344px;font-size:14px;line-height:15px;color:#000;">1026</div>
<div style="left:32px;top:369px;width:7px;height:1px;background:transparent;background:repeating-linear-gradient(90deg,#000 0px,#000 1px,transparent 1px,transparent 2px);"></div>
<div class="t" style="left:41px;top:362px;font-size:14px;line-height:15px;color:#000;">Read</div>
<div class="t" style="left:92px;top:362px;font-size:14px;line-height:15px;color:#000;">30840</div>
<div class="t" style="left:149px;top:362px;font-size:14px;line-height:15px;color:#000;">XO1GY44TF</div>
<div class="t" style="left:361px;top:362px;font-size:14px;line-height:15px;color:#000;">22567</div>
<div class="t" style="left:436px;top:362px;font-size:14px;line-height:15px;color:#000;">1025</div>
<div style="left:32px;top:387px;width:7px;height:1px;background:transparent;background:repeating-linear-gradient(90deg,#000 0px,#000 1px,transparent 1px,transparent 2px);"></div>
<div class="t" style="left:41px;top:380px;font-size:14px;line-height:15px;color:#000;">Read</div>
<div class="t" style="left:92px;top:380px;font-size:14px;line-height:15px;color:#000;">38036</div>
<div class="t" style="left:149px;top:380px;font-size:14px;line-height:15px;color:#000;">XO1D665TF</div>
<div class="t" style="left:361px;top:380px;font-size:14px;line-height:15px;color:#000;">11789</div>
<div class="t" style="left:436px;top:380px;font-size:14px;line-height:15px;color:#000;">1023</div>
<div style="left:32px;top:405px;width:7px;height:1px;background:transparent;background:repeating-linear-gradient(90deg,#000 0px,#000 1px,transparent 1px,transparent 2px);"></div>
<div class="t" style="left:41px;top:398px;font-size:14px;line-height:15px;color:#000;">Read</div>
<div class="t" style="left:92px;top:398px;font-size:14px;line-height:15px;color:#000;">44981</div>
<div class="t" style="left:149px;top:398px;font-size:14px;line-height:15px;color:#000;">XO1E439TR</div>
<div class="t" style="left:361px;top:398px;font-size:14px;line-height:15px;color:#000;">112699</div>
<div class="t" style="left:436px;top:398px;font-size:14px;line-height:15px;color:#000;">1020</div>
<div style="left:32px;top:423px;width:7px;height:1px;background:transparent;background:repeating-linear-gradient(90deg,#000 0px,#000 1px,transparent 1px,transparent 2px);"></div>
<div class="t" style="left:41px;top:416px;font-size:14px;line-height:15px;color:#000;">Read</div>
<div class="t" style="left:92px;top:416px;font-size:14px;line-height:15px;color:#000;">23091</div>
<div class="t" style="left:149px;top:416px;font-size:14px;line-height:15px;color:#000;">XO1CG06TR</div>
<div class="t" style="left:361px;top:416px;font-size:14px;line-height:15px;color:#000;">71863</div>
<div class="t" style="left:436px;top:416px;font-size:14px;line-height:15px;color:#000;">1019</div>
<div style="left:32px;top:441px;width:7px;height:1px;background:transparent;background:repeating-linear-gradient(90deg,#000 0px,#000 1px,transparent 1px,transparent 2px);"></div>
<div class="t" style="left:41px;top:434px;font-size:14px;line-height:15px;color:#000;">Read</div>
<div class="t" style="left:92px;top:434px;font-size:14px;line-height:15px;color:#000;">17375</div>
<div class="t" style="left:149px;top:434px;font-size:14px;line-height:15px;color:#000;">XO1FP33TR</div>
<div class="t" style="left:361px;top:434px;font-size:14px;line-height:15px;color:#000;">112388</div>
<div class="t" style="left:436px;top:434px;font-size:14px;line-height:15px;color:#000;">1019</div>
<div style="left:32px;top:459px;width:7px;height:1px;background:transparent;background:repeating-linear-gradient(90deg,#000 0px,#000 1px,transparent 1px,transparent 2px);"></div>
<div class="t" style="left:41px;top:452px;font-size:14px;line-height:15px;color:#000;">Read</div>
<div class="t" style="left:92px;top:452px;font-size:14px;line-height:15px;color:#000;">57686</div>
<div class="t" style="left:149px;top:452px;font-size:14px;line-height:15px;color:#000;">XOOAV64TR</div>
<div class="t" style="left:361px;top:452px;font-size:14px;line-height:15px;color:#000;">27131</div>
<div class="t" style="left:436px;top:452px;font-size:14px;line-height:15px;color:#000;">1018</div>
<div style="left:32px;top:477px;width:7px;height:1px;background:transparent;background:repeating-linear-gradient(90deg,#000 0px,#000 1px,transparent 1px,transparent 2px);"></div>
<div class="t" style="left:41px;top:470px;font-size:14px;line-height:15px;color:#000;">Read</div>
<div class="t" style="left:92px;top:470px;font-size:14px;line-height:15px;color:#000;">44960</div>
<div class="t" style="left:149px;top:470px;font-size:14px;line-height:15px;color:#000;">XO1HO33TF</div>
<div class="t" style="left:361px;top:470px;font-size:14px;line-height:15px;color:#000;">13104</div>
<div class="t" style="left:436px;top:470px;font-size:14px;line-height:15px;color:#000;">1017</div>
</div>
<div style="left:835px;top:177px;width:15px;height:435px;background:#c4c4c4;"></div>
<div style="left:835px;top:177px;width:1px;height:435px;background:#8c8c8c;"></div>
<div style="left:849px;top:177px;width:1px;height:435px;background:#8c8c8c;"></div>
<div style="left:835px;top:130px;width:13px;height:13px;border:1px solid #606060;background:#e6e6e6;"></div>
<div style="left:836px;top:131px;width:13px;height:1px;background:#fff;"></div>
<div style="left:836px;top:131px;width:1px;height:13px;background:#fff;"></div>
<div style="left:835px;top:144px;width:13px;height:31px;border:1px solid #606060;background:#e6e6e6;"></div>
<div style="left:836px;top:145px;width:13px;height:1px;background:#fff;"></div>
<div style="left:836px;top:145px;width:1px;height:31px;background:#fff;"></div>
<div style="left:835px;top:612px;width:13px;height:13px;border:1px solid #606060;background:#e6e6e6;"></div>
<div style="left:836px;top:613px;width:13px;height:1px;background:#fff;"></div>
<div style="left:836px;top:613px;width:1px;height:13px;background:#fff;"></div>
<svg style="left:839px;top:135px" width="7" height="5" shape-rendering="crispEdges" fill="#000"><rect x="3" y="0" width="1" height="1"/><rect x="2" y="1" width="1" height="1"/><rect x="3" y="1" width="1" height="1"/><rect x="4" y="1" width="1" height="1"/><rect x="1" y="2" width="1" height="1"/><rect x="2" y="2" width="1" height="1"/><rect x="3" y="2" width="1" height="1"/><rect x="4" y="2" width="1" height="1"/><rect x="5" y="2" width="1" height="1"/><rect x="0" y="3" width="1" height="1"/><rect x="1" y="3" width="1" height="1"/><rect x="2" y="3" width="1" height="1"/><rect x="3" y="3" width="1" height="1"/><rect x="4" y="3" width="1" height="1"/><rect x="5" y="3" width="1" height="1"/><rect x="6" y="3" width="1" height="1"/><rect x="1" y="4" width="1" height="1"/><rect x="5" y="4" width="1" height="1"/></svg>
<svg style="left:839px;top:617px" width="7" height="5" shape-rendering="crispEdges" fill="#000"><rect x="1" y="0" width="1" height="1"/><rect x="5" y="0" width="1" height="1"/><rect x="0" y="1" width="1" height="1"/><rect x="1" y="1" width="1" height="1"/><rect x="2" y="1" width="1" height="1"/><rect x="3" y="1" width="1" height="1"/><rect x="4" y="1" width="1" height="1"/><rect x="5" y="1" width="1" height="1"/><rect x="6" y="1" width="1" height="1"/><rect x="1" y="2" width="1" height="1"/><rect x="2" y="2" width="1" height="1"/><rect x="3" y="2" width="1" height="1"/><rect x="4" y="2" width="1" height="1"/><rect x="5" y="2" width="1" height="1"/><rect x="2" y="3" width="1" height="1"/><rect x="3" y="3" width="1" height="1"/><rect x="4" y="3" width="1" height="1"/><rect x="3" y="4" width="1" height="1"/></svg>
<svg style="left:838px;top:151px" width="9" height="19"><path d="M1 7 L7 1 M1 12 L7 6 M1 17 L7 11" stroke="#8a8a8a" stroke-width="1" fill="none"/></svg>
<div class="tf" style="left:38.74px;top:642px;font-size:14px;line-height:15px;color:#000;transform:scaleX(0.9600);">IID:</div>
<div class="tf" style="left:34.15px;top:676px;font-size:14px;line-height:15px;color:#000;transform:scaleX(0.9520);">EID:</div>
<div style="left:67px;top:639px;width:388px;height:19px;border:1px solid #8e8e8e;background:#fff;"></div>
<div style="left:67px;top:673px;width:388px;height:19px;border:1px solid #8e8e8e;background:#fff;"></div>
<div style="left:464px;top:643px;width:90px;height:51px;border:1px solid #fff;"></div>
<div style="left:463px;top:642px;width:90px;height:51px;border:1px solid #8e8e8e;"></div>
<div style="left:471px;top:640px;width:47px;height:5px;background:#e6e6e6;"></div>
<div class="tf" style="left:472.23px;top:635px;font-size:14px;line-height:15px;color:#000;transform:scaleX(0.9189);">Display</div>
<div style="left:563px;top:643px;width:286px;height:51px;border:1px solid #fff;"></div>
<div style="left:562px;top:642px;width:286px;height:51px;border:1px solid #8e8e8e;"></div>
<div style="left:570px;top:640px;width:76px;height:5px;background:#e6e6e6;"></div>
<div class="tf" style="left:571.07px;top:635px;font-size:14px;line-height:15px;color:#000;transform:scaleX(0.9276);">Distributions</div>
<div style="left:477px;top:659px;width:11px;height:11px;border:1px solid #5a5a5a;background:#fff;"></div>
<svg style="left:478px;top:660px" width="11" height="11"><path d="M2.3 6.3 L5.2 9 L9.3 2.8" stroke="#3b47a6" stroke-width="2.1" fill="none"/></svg>
<div class="tf" style="left:495.19px;top:659px;font-size:14px;line-height:15px;color:#000;transform:scaleX(0.9128);">Reads</div>
<div style="left:573px;top:656px;width:83px;height:28px;border:1px solid #606060;background:#e6e6e6;"></div>
<div style="left:574px;top:657px;width:83px;height:1px;background:#fff;"></div>
<div style="left:574px;top:657px;width:1px;height:28px;background:#fff;"></div>
<div class="tf" style="left:594.66px;top:664px;font-size:14px;line-height:15px;color:#000;transform:scaleX(0.9390);">Length</div>
<div style="left:664px;top:656px;width:83px;height:28px;border:1px solid #606060;background:#e6e6e6;"></div>
<div style="left:665px;top:657px;width:83px;height:1px;background:#fff;"></div>
<div style="left:665px;top:657px;width:1px;height:28px;background:#fff;"></div>
<div class="tf" style="left:671.68px;top:664px;font-size:14px;line-height:15px;color:#000;transform:scaleX(0.9162);">Read Count</div>
<div style="left:755px;top:656px;width:83px;height:28px;border:1px solid #606060;background:#e6e6e6;"></div>
<div style="left:756px;top:657px;width:83px;height:1px;background:#fff;"></div>
<div style="left:756px;top:657px;width:1px;height:28px;background:#fff;"></div>
<div class="tf" style="left:763.50px;top:664px;font-size:14px;line-height:15px;color:#000;transform:scaleX(0.9230);">GC Content</div>
<div class="tf" style="left:15.76px;top:726px;font-size:14px;line-height:15px;color:#000;transform:scaleX(0.9434);">Select from 776 contigs in Xoo.bnk/</div>
<svg style="left:859px;top:728px" width="17" height="17"><path d="M3 16 L16 3 M7.5 16 L16 7.5 M12 16 L16 12" stroke="#7a7a7a" stroke-width="1.5" fill="none"/></svg>
</body></html>
